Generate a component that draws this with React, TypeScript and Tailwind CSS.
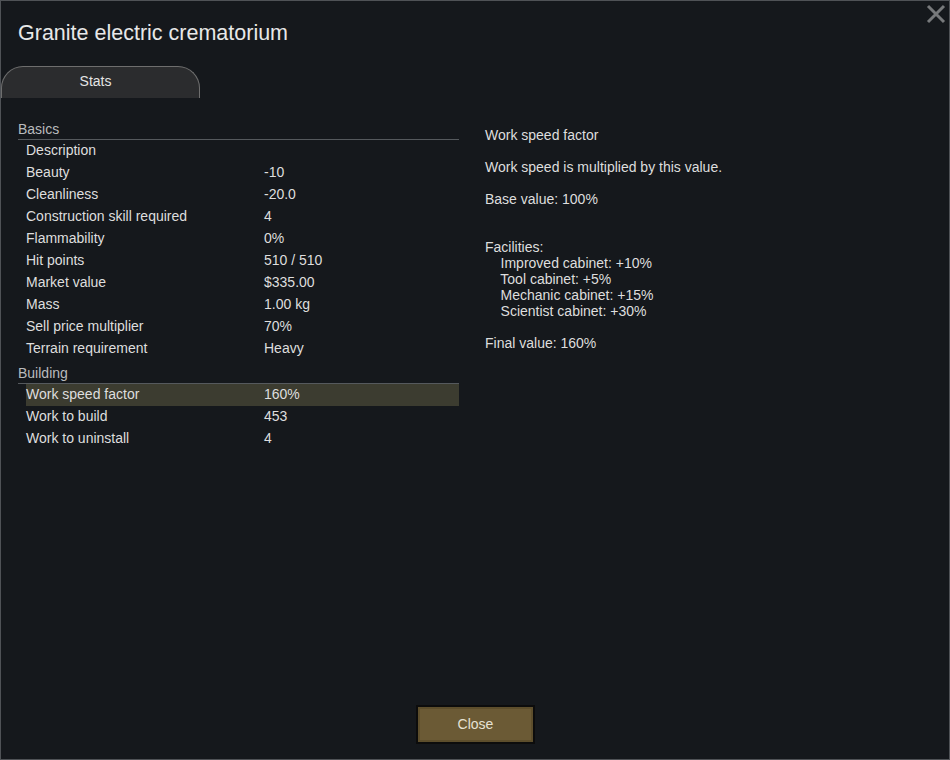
import React from "react";

const basics: [string, string][] = [
  ["Description", ""],
  ["Beauty", "-10"],
  ["Cleanliness", "-20.0"],
  ["Construction skill required", "4"],
  ["Flammability", "0%"],
  ["Hit points", "510 / 510"],
  ["Market value", "$335.00"],
  ["Mass", "1.00 kg"],
  ["Sell price multiplier", "70%"],
  ["Terrain requirement", "Heavy"],
];

const building: [string, string, boolean][] = [
  ["Work speed factor", "160%", true],
  ["Work to build", "453", false],
  ["Work to uninstall", "4", false],
];

function Header({ label }: { label: string }) {
  return (
    <div className="h-[24px] flex items-end pb-[2px] border-b border-[#55595d] text-[14px] leading-[16px] text-[#b9bbbd]">
      {label}
    </div>
  );
}

function Row({ k, v, hl }: { k: string; v: string; hl?: boolean }) {
  return (
    <div
      className={`ml-[8px] h-[22px] flex items-center pb-[2px] text-[14px] leading-[16px] text-[#dedede] ${
        hl ? "bg-[#3c3c30]" : ""
      }`}
    >
      <span className="w-[238px] shrink-0">{k}</span>
      <span>{v}</span>
    </div>
  );
}

export default function App() {
  return (
    <div
      className="w-[950px] h-[760px] bg-[#15181c] border border-[#4f5256] flex flex-col relative text-[#e0e0e0]"
      style={{ fontFamily: '"Liberation Sans", Arial, sans-serif' }}
    >
      <button className="absolute right-[3px] top-[3px] w-[20px] h-[20px]">
        <svg width="20" height="20" viewBox="0 0 20 20">
          <path d="M2 2 L18 18 M18 2 L2 18" stroke="#77797b" strokeWidth="3" />
        </svg>
      </button>
      <div className="pl-[17px] pt-[20px] h-[65px] text-[21.5px] leading-[24px] text-[#e8e8e8]">
        Granite electric crematorium
      </div>
      <div className="h-[32px] flex">
        <div className="w-[199px] h-[32px] rounded-t-[22px] border-t border-x border-[#6e6e6e] bg-[#2b2c2e] flex items-start justify-center pt-[6px] pr-[10px] text-[14px] leading-[16px] text-[#e4e4e4]">
          Stats
        </div>
      </div>
      <div className="flex pt-[17px]">
        <div className="ml-[17px] w-[441px] flex flex-col">
          <div className="h-[1px]" />
          <Header label="Basics" />
          {basics.map(([k, v]) => (
            <Row key={k} k={k} v={v} />
          ))}
          <Header label="Building" />
          {building.map(([k, v, hl]) => (
            <Row key={k} k={k} v={v} hl={hl} />
          ))}
        </div>
        <div className="ml-[26px] pt-[12px] text-[14px] leading-[16px] text-[#dedede] whitespace-pre">
          {`Work speed factor

Work speed is multiplied by this value.

Base value: 100%


Facilities:
    Improved cabinet: +10%
    Tool cabinet: +5%
    Mechanic cabinet: +15%
    Scientist cabinet: +30%

Final value: 160%`}
        </div>
      </div>
      <div className="mt-auto mb-[15px] flex justify-center">
        <button className="w-[119px] h-[39px] ml-[1px] bg-[#6b5a35] border-2 border-[#0c0c0c] shadow-[inset_0_0_0_2px_#5d4e2c] text-[14px] text-[#e6e2d4] flex items-center justify-center">
          Close
        </button>
      </div>
    </div>
  );
}
